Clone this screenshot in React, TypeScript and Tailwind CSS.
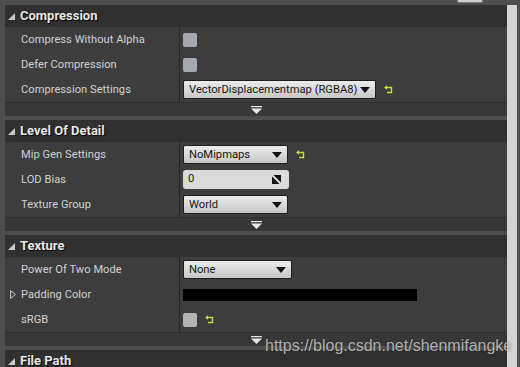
import React from "react";

const Reset = () => (
  <svg width="10" height="10" viewBox="0 0 10 10" className="block">
    <path d="M1.5 2.5 H7.5 V7.5 H3" fill="none" stroke="#c2dc3c" strokeWidth="1.4" />
    <path d="M0 2.5 L3 0.3 L3 4.7 Z" fill="#c2dc3c" />
  </svg>
);

const HeaderTri = () => (
  <svg width="7" height="7" viewBox="0 0 7 7" className="block">
    <path d="M7 0 L7 7 L0 7 Z" fill="#c8c8c8" />
  </svg>
);

const DownArrow = () => (
  <svg width="10" height="6" viewBox="0 0 10 6" className="block shrink-0">
    <path d="M0 0 H10 L5 6 Z" fill="#111" />
  </svg>
);

const ExpandArrow = () => (
  <svg width="11" height="8" viewBox="0 0 11 8" className="block">
    <rect x="0" y="0" width="11" height="1.2" fill="#e8e8e8" />
    <path d="M0 2.5 H11 L5.5 8 Z" fill="#e8e8e8" />
  </svg>
);

const Checkbox = ({ light }: { light?: boolean }) => (
  <div
    className={`w-[14px] h-[14px] rounded-[2px] ${light ? "bg-[#b4b4b6]" : "bg-[#a4a8b0]"}`}
  />
);

const Dropdown = ({ text, w }: { text: string; w: string }) => (
  <div
    className={`${w} h-[19px] rounded-[2px] border border-[#1e1e1e] bg-gradient-to-b from-[#ececec] to-[#c6c6c6] flex items-center justify-between pl-[5px] pr-[5px] text-[#151515] text-[11.2px] leading-none whitespace-nowrap`}
  >
    <span>{text}</span>
    <DownArrow />
  </div>
);

const Row = ({
  label,
  children,
  expandable,
}: {
  label: string;
  children?: React.ReactNode;
  expandable?: boolean;
}) => (
  <div className="h-[25px] flex">
    <div className="w-[174px] flex items-center pl-[16px] pt-[1px] relative text-[#d2d2d2] text-[11.1px] tracking-[0.05px] whitespace-nowrap">
      {expandable && (
        <svg width="6" height="9" viewBox="0 0 6 9" className="absolute left-[5px] top-[8px]">
          <path d="M0.6 0.6 L5.4 4.5 L0.6 8.4 Z" fill="none" stroke="#cfcfcf" strokeWidth="1" />
        </svg>
      )}
      {label}
    </div>
    <div className="w-[1px] bg-[#262626]" />
    <div className="flex-1 flex items-center pl-[3px] gap-[8px]">{children}</div>
  </div>
);

const Section = ({
  title,
  children,
}: {
  title: string;
  children?: React.ReactNode;
}) => (
  <div className="flex flex-col">
    <div className="h-[22px] bg-[#303030] flex items-center pl-[3px] gap-[5px]">
      <HeaderTri />
      <span
        className="text-[13px] font-bold text-[#e6e6e6]"
        style={{ textShadow: "1px 1px 1px #000" }}
      >
        {title}
      </span>
    </div>
    {children && (
      <>
        <div className="bg-[#3d3d3d] flex flex-col">{children}</div>
        <div className="h-[14px] bg-[#383838] border-t border-[#2e2e2e] flex items-center justify-center">
          <ExpandArrow />
        </div>
      </>
    )}
  </div>
);

export default function App() {
  return (
    <div
      className="w-[520px] h-[367px] bg-[#4e4e4e] overflow-hidden relative flex"
      style={{ fontFamily: "Roboto, 'Noto Sans', sans-serif" }}
    >
      <div className="flex-1 pt-[5px] pl-[5px] flex flex-col gap-[4px]">
        <Section title="Compression">
          <Row label="Compress Without Alpha">
            <Checkbox />
          </Row>
          <Row label="Defer Compression">
            <Checkbox />
          </Row>
          <Row label="Compression Settings">
            <Dropdown text="VectorDisplacementmap (RGBA8)" w="w-[193px]" />
            <Reset />
          </Row>
        </Section>
        <Section title="Level Of Detail">
          <Row label="Mip Gen Settings">
            <Dropdown text="NoMipmaps" w="w-[105px]" />
            <Reset />
          </Row>
          <Row label="LOD Bias">
            <div className="w-[106px] h-[19px] rounded-[3px] bg-[#dadada] flex items-center justify-between pl-[5px] pr-[8px] text-[#151515] text-[11.2px]">
              <span>0</span>
              <svg width="9" height="9" viewBox="0 0 9 9" className="block">
                <path d="M1.5 0 H9 V7.5 Z" fill="#111" />
                <path d="M0 1.5 V9 H7.5 Z" fill="#111" />
              </svg>
            </div>
          </Row>
          <Row label="Texture Group">
            <Dropdown text="World" w="w-[105px]" />
          </Row>
        </Section>
        <Section title="Texture">
          <Row label="Power Of Two Mode">
            <Dropdown text="None" w="w-[109px]" />
          </Row>
          <Row label="Padding Color" expandable>
            <div className="w-[234px] h-[12px] bg-black" />
          </Row>
          <Row label="sRGB">
            <Checkbox light />
            <Reset />
          </Row>
        </Section>
        <Section title="File Path" />
      </div>
      <div className="w-[10px] mt-[5px] bg-[#d4d4d4]" />
      <div className="w-[3px]" />
      <div className="absolute left-[457px] top-[-2px] w-[26px] h-[5px] bg-[#cfcfcf] border border-[#777] rounded-[2px]" />
      <div
        className="absolute left-[265px] top-[338px] text-[16px] text-[#d4d4d4]/80 leading-none"
        style={{ fontFamily: "'Liberation Sans', Arial, sans-serif", textShadow: "0 0 2px rgba(0,0,0,0.4)" }}
      >
        https://blog.csdn.net/shenmifangke
      </div>
    </div>
  );
}
